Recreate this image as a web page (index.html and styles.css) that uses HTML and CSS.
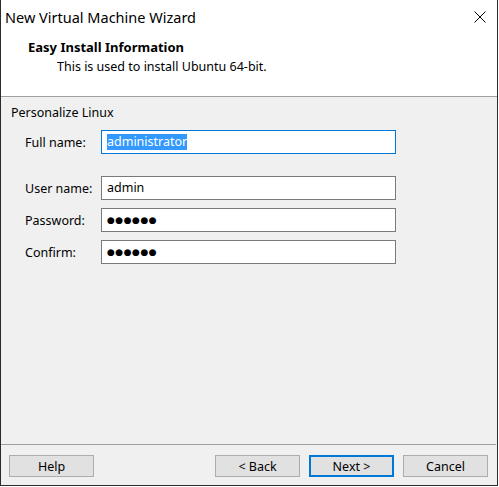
FILE: index.html
```html
<!DOCTYPE html>
<html lang="en">
<head>
<meta charset="utf-8">
<title>New Virtual Machine Wizard</title>
<link rel="stylesheet" href="styles.css">
</head>
<body>
<div class="window">
  <div class="header">
    <div class="titlebar">
      <span class="title">New Virtual Machine Wizard</span>
      <svg class="close" width="12" height="12" viewBox="0 0 12 12" aria-hidden="true">
        <path d="M0.5 0.5 L11.5 11.5 M11.5 0.5 L0.5 11.5" stroke="#000" stroke-width="1" fill="none"/>
      </svg>
    </div>
    <div class="banner">
      <div class="banner-title">Easy Install Information</div>
      <div class="banner-sub">This is used to install Ubuntu 64-bit.</div>
    </div>
  </div>
  <div class="content">
    <div class="section-title">Personalize Linux</div>
    <div class="form">
      <div class="row row-first">
        <span class="label">Full name:</span>
        <div class="field focused"><span class="selected">administrator</span></div>
      </div>
      <div class="row">
        <span class="label">User name:</span>
        <div class="field">admin</div>
      </div>
      <div class="row">
        <span class="label">Password:</span>
        <div class="field"><span class="dots">●●●●●●</span></div>
      </div>
      <div class="row">
        <span class="label">Confirm:</span>
        <div class="field"><span class="dots">●●●●●●</span></div>
      </div>
    </div>
  </div>
  <div class="footer">
    <div class="footer-line"></div>
    <div class="buttons">
      <button class="btn">Help</button>
      <div class="spacer"></div>
      <button class="btn">&lt; Back</button>
      <button class="btn btn-default">Next &gt;</button>
      <button class="btn">Cancel</button>
    </div>
  </div>
</div>
</body>
</html>
```

FILE: styles.css
```css
* { box-sizing: border-box; }

html, body {
  margin: 0;
  padding: 0;
  background: #ffffff;
}

body {
  font-family: "Noto Sans", "Open Sans", sans-serif;
  font-size: 12.5px;
  color: #000;
}

.window {
  width: 498px;
  height: 486px;
  border-left: 1px solid #2b2b2b;
  border-right: 1px solid #2b2b2b;
  border-bottom: 1px solid #2b2b2b;
  display: flex;
  flex-direction: column;
  background: #f0f0f0;
}

.header {
  background: #ffffff;
  height: 97px;
  border-bottom: 1px solid #a0a0a0;
}

.titlebar {
  height: 33px;
  display: flex;
  align-items: center;
  justify-content: space-between;
  padding: 0 11px 0 4px;
}

.title {
  font-size: 14.5px;
  line-height: 20px;
}

.close {
  display: block;
}

.banner {
  padding-left: 27px;
  padding-top: 5px;
}

.banner-title {
  font-weight: bold;
  font-size: 13px;
  line-height: 18px;
}

.banner-sub {
  padding-left: 29px;
  line-height: 18px;
  margin-top: 2px;
}

.content {
  flex: 1;
  padding: 7px 0 0 10px;
}

.section-title {
  line-height: 18px;
}

.form {
  margin-top: 8px;
  padding-left: 14px;
  display: flex;
  flex-direction: column;
  gap: 8px;
}

.row {
  display: flex;
  align-items: center;
  height: 24px;
}

.row-first {
  margin-bottom: 14px;
}

.label {
  width: 76px;
  flex: none;
}

.field {
  width: 295px;
  height: 24px;
  background: #ffffff;
  border: 1px solid #7a7a7a;
  padding: 0 5px;
  display: flex;
  align-items: center;
  line-height: 16px;
}

.field.focused {
  border-color: #0078d7;
}

.selected {
  background: #3399ff;
  color: #ffffff;
  line-height: 16px;
}

.dots {
  font-family: "DejaVu Sans", sans-serif;
  font-size: 9px;
  letter-spacing: 0.5px;
}

.footer {
  flex: none;
}

.footer-line {
  height: 1px;
  background: #a0a0a0;
  margin-right: 1px;
}

.buttons {
  display: flex;
  gap: 9px;
  padding: 10px 9px 8px 8px;
}

.spacer {
  flex: 1;
}

.btn {
  width: 85px;
  height: 22px;
  background: #e1e1e1;
  border: 1px solid #adadad;
  font-family: inherit;
  font-size: 12.5px;
  color: #000;
  padding: 0;
  margin: 0;
}

.btn-default {
  border: 2px solid #0078d7;
}
```
